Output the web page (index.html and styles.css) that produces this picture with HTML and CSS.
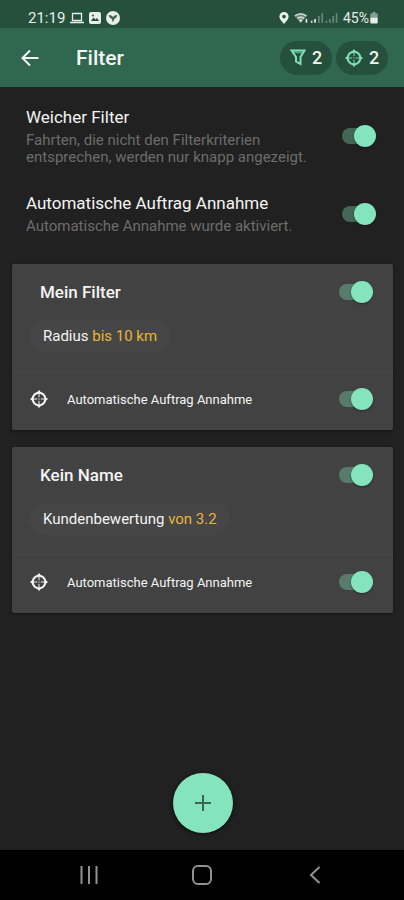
FILE: index.html
```html
<!DOCTYPE html>
<html lang="de">
<head>
<meta charset="utf-8">
<meta name="viewport" content="width=device-width, initial-scale=1">
<title>Filter</title>
<link rel="stylesheet" href="styles.css">
</head>
<body>
<svg class="defs" aria-hidden="true">
  <symbol id="crosshair" viewBox="0 0 18 18">
    <circle cx="9" cy="9" r="6.300" fill="none" stroke="currentColor" stroke-width="2"/>
    <path d="M9 0l2.500 3h-5zM9 18l2.500-3h-5zM0 9l3-2.500v5zM18 9l-3-2.500v5z" fill="currentColor"/>
    <path d="M9 3v4M9 11v4M3 9h4M11 9h4" stroke="currentColor" stroke-width="1.500" opacity=".65"/>
    <path d="M9 7.500v3M7.500 9h3" stroke="currentColor" stroke-width="1" opacity=".4"/>
  </symbol>
</svg>
<div class="status">
  <span class="clock">21:19</span>
  <svg width="14" height="12" viewBox="0 0 14 12"><path d="M2.500 1.500h9v7h-9zM0 10.500h14" fill="none" stroke="currentColor" stroke-width="1.300"/></svg>
  <svg width="12" height="12" viewBox="0 0 12 12"><rect width="12" height="12" rx="2" fill="currentColor"/><path d="M2 9l2.500-3.500 2 2L8 6l2 3z" fill="#25503c"/><circle cx="4" cy="3.500" r="1" fill="#25503c"/></svg>
  <svg width="14" height="14" viewBox="0 0 14 14"><circle cx="7" cy="7" r="7" fill="currentColor"/><path d="M2.500 4l3 .5L7 6l1.500-1.500 3-.5-1.500 3-1.500.5L7 11.500 5.500 7.500 4 7z" fill="#3f6352"/></svg>
  <span class="spring"></span>
  <svg width="10" height="12" viewBox="0 0 10 13"><path d="M5 0a5 5 0 0 0-5 5c0 3.200 5 8 5 8s5-4.800 5-8a5 5 0 0 0-5-5zm0 3a2 2 0 1 1 0 4 2 2 0 0 1 0-4z" fill="currentColor" fill-rule="evenodd"/></svg>
  <svg width="44" height="12" viewBox="0 0 46 12"><path d="M0 3.500Q7 -2 14 3.500L7 11z" fill="currentColor" opacity=".35"/><path d="M1 4Q7 -.5 13 4M3.500 6.500Q7 4 10.500 6.500" fill="none" stroke="currentColor" stroke-width="1.400" opacity=".85"/><path d="M5 8Q7 6.500 9 8L7 11z" fill="currentColor" opacity=".85"/><path d="M13 7v4M18.500 9v2M22 7v4" stroke="currentColor" stroke-width="1.700"/><path d="M26 4v7M29.500 1v10M34 9v2M37.500 7v4M41 4v7M44.500 1v10" stroke="currentColor" stroke-width="1.700" opacity=".35"/></svg>
  <span class="battery">45%<svg width="8" height="12" viewBox="0 0 8 13"><path d="M2.500 0h3v1.500H8V6H0V1.500h2.500z" fill="currentColor" opacity=".5"/><path d="M0 6h8v5.500q0 1-1 1H1q-1 0-1-1z" fill="currentColor"/></svg></span>
</div>
<header class="bar">
  <button class="back" aria-label="Zurück"><svg width="18" height="18" viewBox="0 0 18 18"><path d="M17.500 9H2M9 1.500L1.500 9 9 16.500" fill="none" stroke="currentColor" stroke-width="2"/></svg></button>
  <h1>Filter</h1>
  <button class="count"><svg width="16" height="17" viewBox="0 0 16 17"><path d="M1.500 1.500h13L10.500 8v7L6 12.500V8z" fill="none" stroke="currentColor" stroke-width="2"/><path d="M4 3.500h8" stroke="currentColor" stroke-width="1.500" opacity=".6"/></svg>2</button>
  <button class="count"><svg width="18" height="18"><use href="#crosshair"/></svg>2</button>
</header>
<main>
  <section class="settings">
    <div class="setting">
      <label for="soft"><span class="name">Weicher Filter</span><span class="hint">Fahrten, die nicht den Filterkriterien entsprechen, werden nur knapp angezeigt.</span></label>
      <input class="switch" type="checkbox" id="soft" checked>
    </div>
    <div class="setting">
      <label for="auto"><span class="name">Automatische Auftrag Annahme</span><span class="hint">Automatische Annahme wurde aktiviert.</span></label>
      <input class="switch" type="checkbox" id="auto" checked>
    </div>
  </section>
  <section class="card">
    <div class="head"><label for="f1">Mein Filter</label><input class="switch" type="checkbox" id="f1" checked></div>
    <div class="chips"><span class="chip">Radius <b>bis 10 km</b></span></div>
    <div class="foot"><svg width="18" height="18"><use href="#crosshair"/></svg><label for="a1">Automatische Auftrag Annahme</label><input class="switch" type="checkbox" id="a1" checked></div>
  </section>
  <section class="card">
    <div class="head"><label for="f2">Kein Name</label><input class="switch" type="checkbox" id="f2" checked></div>
    <div class="chips"><span class="chip">Kundenbewertung <b>von 3.2</b></span></div>
    <div class="foot"><svg width="18" height="18"><use href="#crosshair"/></svg><label for="a2">Automatische Auftrag Annahme</label><input class="switch" type="checkbox" id="a2" checked></div>
  </section>
  <button class="add" aria-label="Filter hinzufügen"><svg width="16" height="16" viewBox="0 0 16 16"><path d="M8 0v16M0 8h16" stroke="currentColor" stroke-width="2"/></svg></button>
</main>
<nav class="system">
  <button aria-label="Letzte Apps"><svg width="18" height="18" viewBox="0 0 18 18"><path d="M1.500 0v18M9 0v18M16.500 0v18" stroke="currentColor" stroke-width="2"/></svg></button>
  <button aria-label="Startseite"><svg width="20" height="20" viewBox="0 0 20 20"><rect x="1" y="1" width="18" height="18" rx="5" fill="none" stroke="currentColor" stroke-width="2"/></svg></button>
  <button aria-label="Zurück"><svg width="12" height="18" viewBox="0 0 12 18"><path d="M10.500 1L2 9l8.500 8" fill="none" stroke="currentColor" stroke-width="2"/></svg></button>
</nav>
</body>
</html>
```
FILE: styles.css
```css
* { box-sizing: border-box; }
body {
  margin: 0;
  min-height: 100vh;
  display: flex;
  flex-direction: column;
  background: #212121;
  color: #f4f4f4;
  font-family: Roboto, "Liberation Sans", sans-serif;
}
button {
  border: 0;
  padding: 0;
  background: none;
  color: inherit;
  font: inherit;
  cursor: pointer;
}
svg { display: block; flex: none; }
.defs { position: absolute; width: 0; height: 0; }

.status {
  display: flex;
  align-items: center;
  gap: 5px;
  height: 28px;
  padding: 8px 26px 0 28px;
  background: #25503c;
  color: #e8eeea;
  font-size: 15px;
  line-height: 20px;
}
.spring { flex: 1; }
.battery { display: flex; align-items: center; gap: 1px; font-size: 14px; }

.bar {
  display: flex;
  align-items: center;
  gap: 4px;
  height: 59px;
  padding: 0 16px 0 21px;
  background: #2f684e;
}
.bar h1 {
  flex: 1;
  margin: 0;
  padding-left: 33px;
  font-size: 21px;
  line-height: 28px;
  font-weight: 500;
}
.count {
  display: flex;
  align-items: center;
  justify-content: center;
  gap: 6px;
  width: 52px;
  height: 34px;
  border-radius: 17px;
  background: #25503c;
  font-size: 18px;
  font-weight: 500;
}
.count svg { color: #80e0b8; }

main { flex: 1; display: flex; flex-direction: column; padding: 0 11px 17px 12px; }
.settings { display: grid; gap: 26px; padding: 19px 17px 29px 14px; }
.setting { display: flex; align-items: center; justify-content: space-between; gap: 16px; }
.name { display: block; margin-bottom: 4px; font-size: 17px; line-height: 22px; }
.hint { display: block; max-width: 288px; color: #6c6c6c; font-size: 15px; line-height: 17px; }

.switch {
  appearance: none;
  position: relative;
  flex: none;
  width: 34px;
  height: 22px;
  margin: 0;
  cursor: pointer;
}
.switch::before, .switch::after { content: ""; position: absolute; }
.switch::before {
  left: 0;
  right: 2px;
  top: 3px;
  bottom: 3px;
  border-radius: 8px;
  background: #80e0b8;
  opacity: .36;
}
.switch::after {
  left: 0;
  top: 0;
  width: 22px;
  height: 22px;
  border-radius: 50%;
  background: #bdbdbd;
  box-shadow: 0 1px 2px rgba(0, 0, 0, .4);
}
.switch:checked::after { left: 12px; background: #84e4bc; }

.card {
  margin-bottom: 17px;
  border-radius: 2px;
  background: #424242;
  box-shadow: 0 1px 3px rgba(0, 0, 0, .4);
}
.head {
  display: flex;
  align-items: center;
  justify-content: space-between;
  height: 56px;
  padding: 0 20px 0 28px;
  font-size: 17px;
  font-weight: 500;
}
.chips { padding: 0 18px 19px; }
.chip {
  display: inline-block;
  padding: 0 13px;
  border-radius: 16px;
  background: #464646;
  font-size: 15px;
  line-height: 32px;
  vertical-align: top;
}
.chip b { color: #e6b53a; font-weight: 400; }
.foot {
  display: flex;
  align-items: center;
  gap: 19px;
  height: 59px;
  padding: 0 20px 4px 18px;
  border-top: 1px solid #484848;
  font-size: 13px;
}
.foot label { flex: 1; }

.add {
  display: grid;
  place-items: center;
  width: 60px;
  height: 60px;
  margin: auto auto 0;
  border-radius: 50%;
  background: #84e4bc;
  color: #3c6653;
  box-shadow: 0 1px 4px rgba(0, 0, 0, .7);
}
.system {
  display: flex;
  align-items: center;
  justify-content: space-evenly;
  height: 50px;
  background: #000;
  color: #929292;
}
.system button { display: grid; place-items: center; width: 48px; height: 48px; }
```
